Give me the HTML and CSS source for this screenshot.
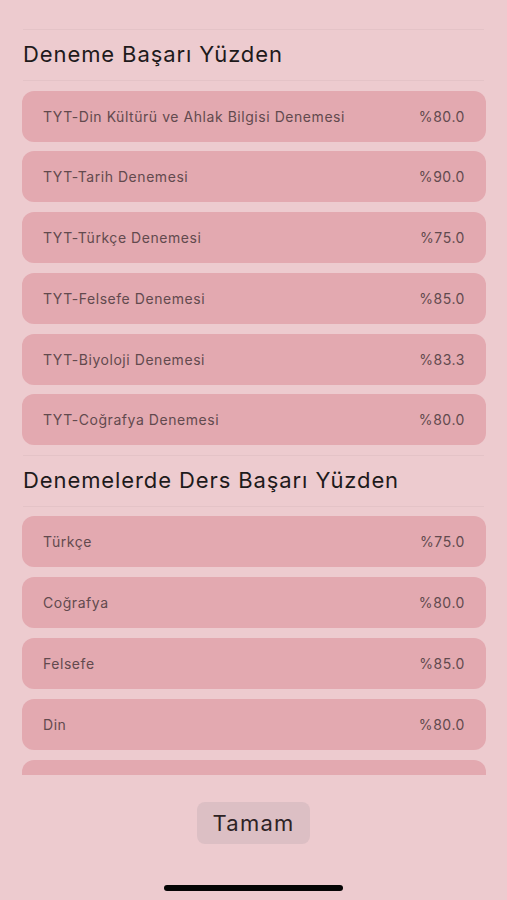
FILE: index.html
```html
<!DOCTYPE html>
<html>
<head>
	<title>Deneme Sonuçları</title>
	<meta name="viewport" content="width=device-width, initial-scale=1.0">
	<link rel="stylesheet" href="styles.css">
</head>
<body>
	<div class="scroll">
		<div class="section-head">Deneme Başarı Yüzden</div>
		<div class="rows">
			<div class="row"><span>TYT-Din Kültürü ve Ahlak Bilgisi Denemesi</span><span>%80.0</span></div>
			<div class="row"><span>TYT-Tarih Denemesi</span><span>%90.0</span></div>
			<div class="row"><span>TYT-Türkçe Denemesi</span><span>%75.0</span></div>
			<div class="row"><span>TYT-Felsefe Denemesi</span><span>%85.0</span></div>
			<div class="row"><span>TYT-Biyoloji Denemesi</span><span>%83.3</span></div>
			<div class="row"><span>TYT-Coğrafya Denemesi</span><span>%80.0</span></div>
		</div>
		<div class="section-head">Denemelerde Ders Başarı Yüzden</div>
		<div class="rows">
			<div class="row"><span>Türkçe</span><span>%75.0</span></div>
			<div class="row"><span>Coğrafya</span><span>%80.0</span></div>
			<div class="row"><span>Felsefe</span><span>%85.0</span></div>
			<div class="row"><span>Din</span><span>%80.0</span></div>
			<!-- next row is scrolled under the edge -->
			<div class="row"></div>
		</div>
	</div>
	<div class="footer">
		<button class="ok">Tamam</button>
		<div class="home-bar"></div>
	</div>
</body>
</html>
```

FILE: styles.css
```css
* {
	margin: 0;
	padding: 0;
	box-sizing: border-box;
}
body {
	width: 507px;
	height: 900px;
	background-color: #edcbcf;
	font-family: Inter, "Noto Sans", sans-serif;
	overflow: hidden;
	display: flex;
	flex-direction: column;
}
.scroll {
	height: 775px;
	overflow: hidden;
	padding: 29px 21px 0 22px;
}
.section-head {
	height: 52px;
	margin-left: 1px;
	margin-right: 2px;
	border-top: 1px solid #e4c3c7;
	border-bottom: 1px solid #e4c3c7;
	display: flex;
	align-items: center;
	font-size: 22px;
	letter-spacing: 0.9px;
	color: #1e1a1b;
	padding-bottom: 2px;
}
.rows {
	display: flex;
	flex-direction: column;
	gap: 9.8px;
	padding: 9.5px 0;
}
.row {
	height: 51px;
	background-color: #e3a9b0;
	border-radius: 12px;
	display: flex;
	justify-content: space-between;
	align-items: center;
	padding: 0 21px 0 21px;
	font-size: 14px;
	letter-spacing: 0.55px;
	color: #624a4e;
}
.footer {
	flex: 1;
	display: flex;
	flex-direction: column;
	align-items: center;
}
.ok {
	margin-top: 27px;
	width: 113px;
	height: 42px;
	border: none;
	border-radius: 8px;
	background-color: #dcbfc4;
	font-family: Inter, "Noto Sans", sans-serif;
	font-size: 22px;
	letter-spacing: 1.2px;
	color: #2e2325;
}
.home-bar {
	margin-top: 41px;
	width: 179px;
	height: 6px;
	border-radius: 3px;
	background-color: #050505;
}
```
